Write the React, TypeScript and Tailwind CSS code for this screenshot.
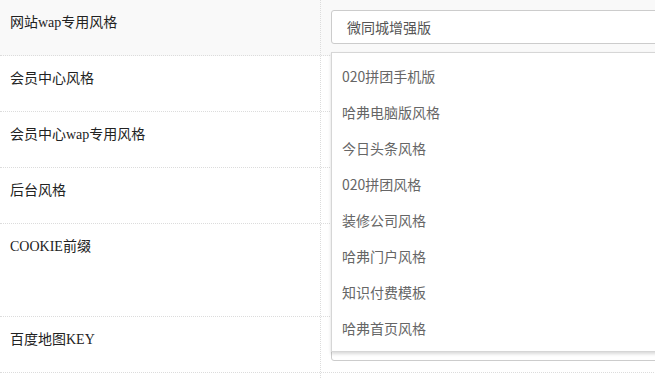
import React from "react";

const labelFont = {
  fontFamily: '"Liberation Serif", "Noto Sans CJK SC", serif',
};
const uiFont = {
  fontFamily: '"Noto Sans CJK SC", "Liberation Sans", sans-serif',
};

const themes = [
  "020拼团手机版",
  "哈弗电脑版风格",
  "今日头条风格",
  "020拼团风格",
  "装修公司风格",
  "哈弗门户风格",
  "知识付费模板",
  "哈弗首页风格",
];

function Row({
  label,
  height = "h-[56px]",
  shaded = false,
  children,
}: {
  label: string;
  height?: string;
  shaded?: boolean;
  children?: React.ReactNode;
}) {
  return (
    <div
      className={`grid grid-cols-[321px_1fr] ${height} border-b border-dotted border-[#dcdcdc] ${
        shaded ? "bg-[#f9f9f9]" : "bg-white"
      }`}
    >
      <div
        className="border-r border-dotted border-[#dcdcdc] pl-[10px] pt-[13px] text-sm leading-5 text-[#222]"
        style={labelFont}
      >
        {label}
      </div>
      <div className="relative pl-[10px] pr-[10px] pt-[10px]">{children}</div>
    </div>
  );
}

export default function App() {
  return (
    <div className="h-[378px] w-[655px] overflow-hidden bg-white">
      <div className="w-[760px]">
        <Row label="网站wap专用风格" shaded>
          <div
            className="h-[34px] rounded-[3px] border border-[#ccc] bg-white pl-[15px] text-sm leading-[32px] text-[#555]"
            style={uiFont}
          >
            微同城增强版
          </div>
          {/* open dropdown */}
          <div
            className="absolute left-[10px] right-[10px] top-[52px] z-10 border border-[#d6d6d6] bg-white py-[5px] shadow-[0_2px_3px_rgba(0,0,0,0.15)]"
            style={uiFont}
          >
            {themes.map((t) => (
              <div key={t} className="h-9 pl-[10px] text-sm leading-9 text-[#666]">
                {t}
              </div>
            ))}
          </div>
        </Row>
        <Row label="会员中心风格" />
        <Row label="会员中心wap专用风格" />
        <Row label="后台风格" />
        <Row label="COOKIE前缀" height="h-[93px]" />
        <Row label="百度地图KEY">
          <div className="h-[34px] rounded-[3px] border border-[#ccc] bg-white" />
        </Row>
        <Row label="" />
      </div>
    </div>
  );
}
